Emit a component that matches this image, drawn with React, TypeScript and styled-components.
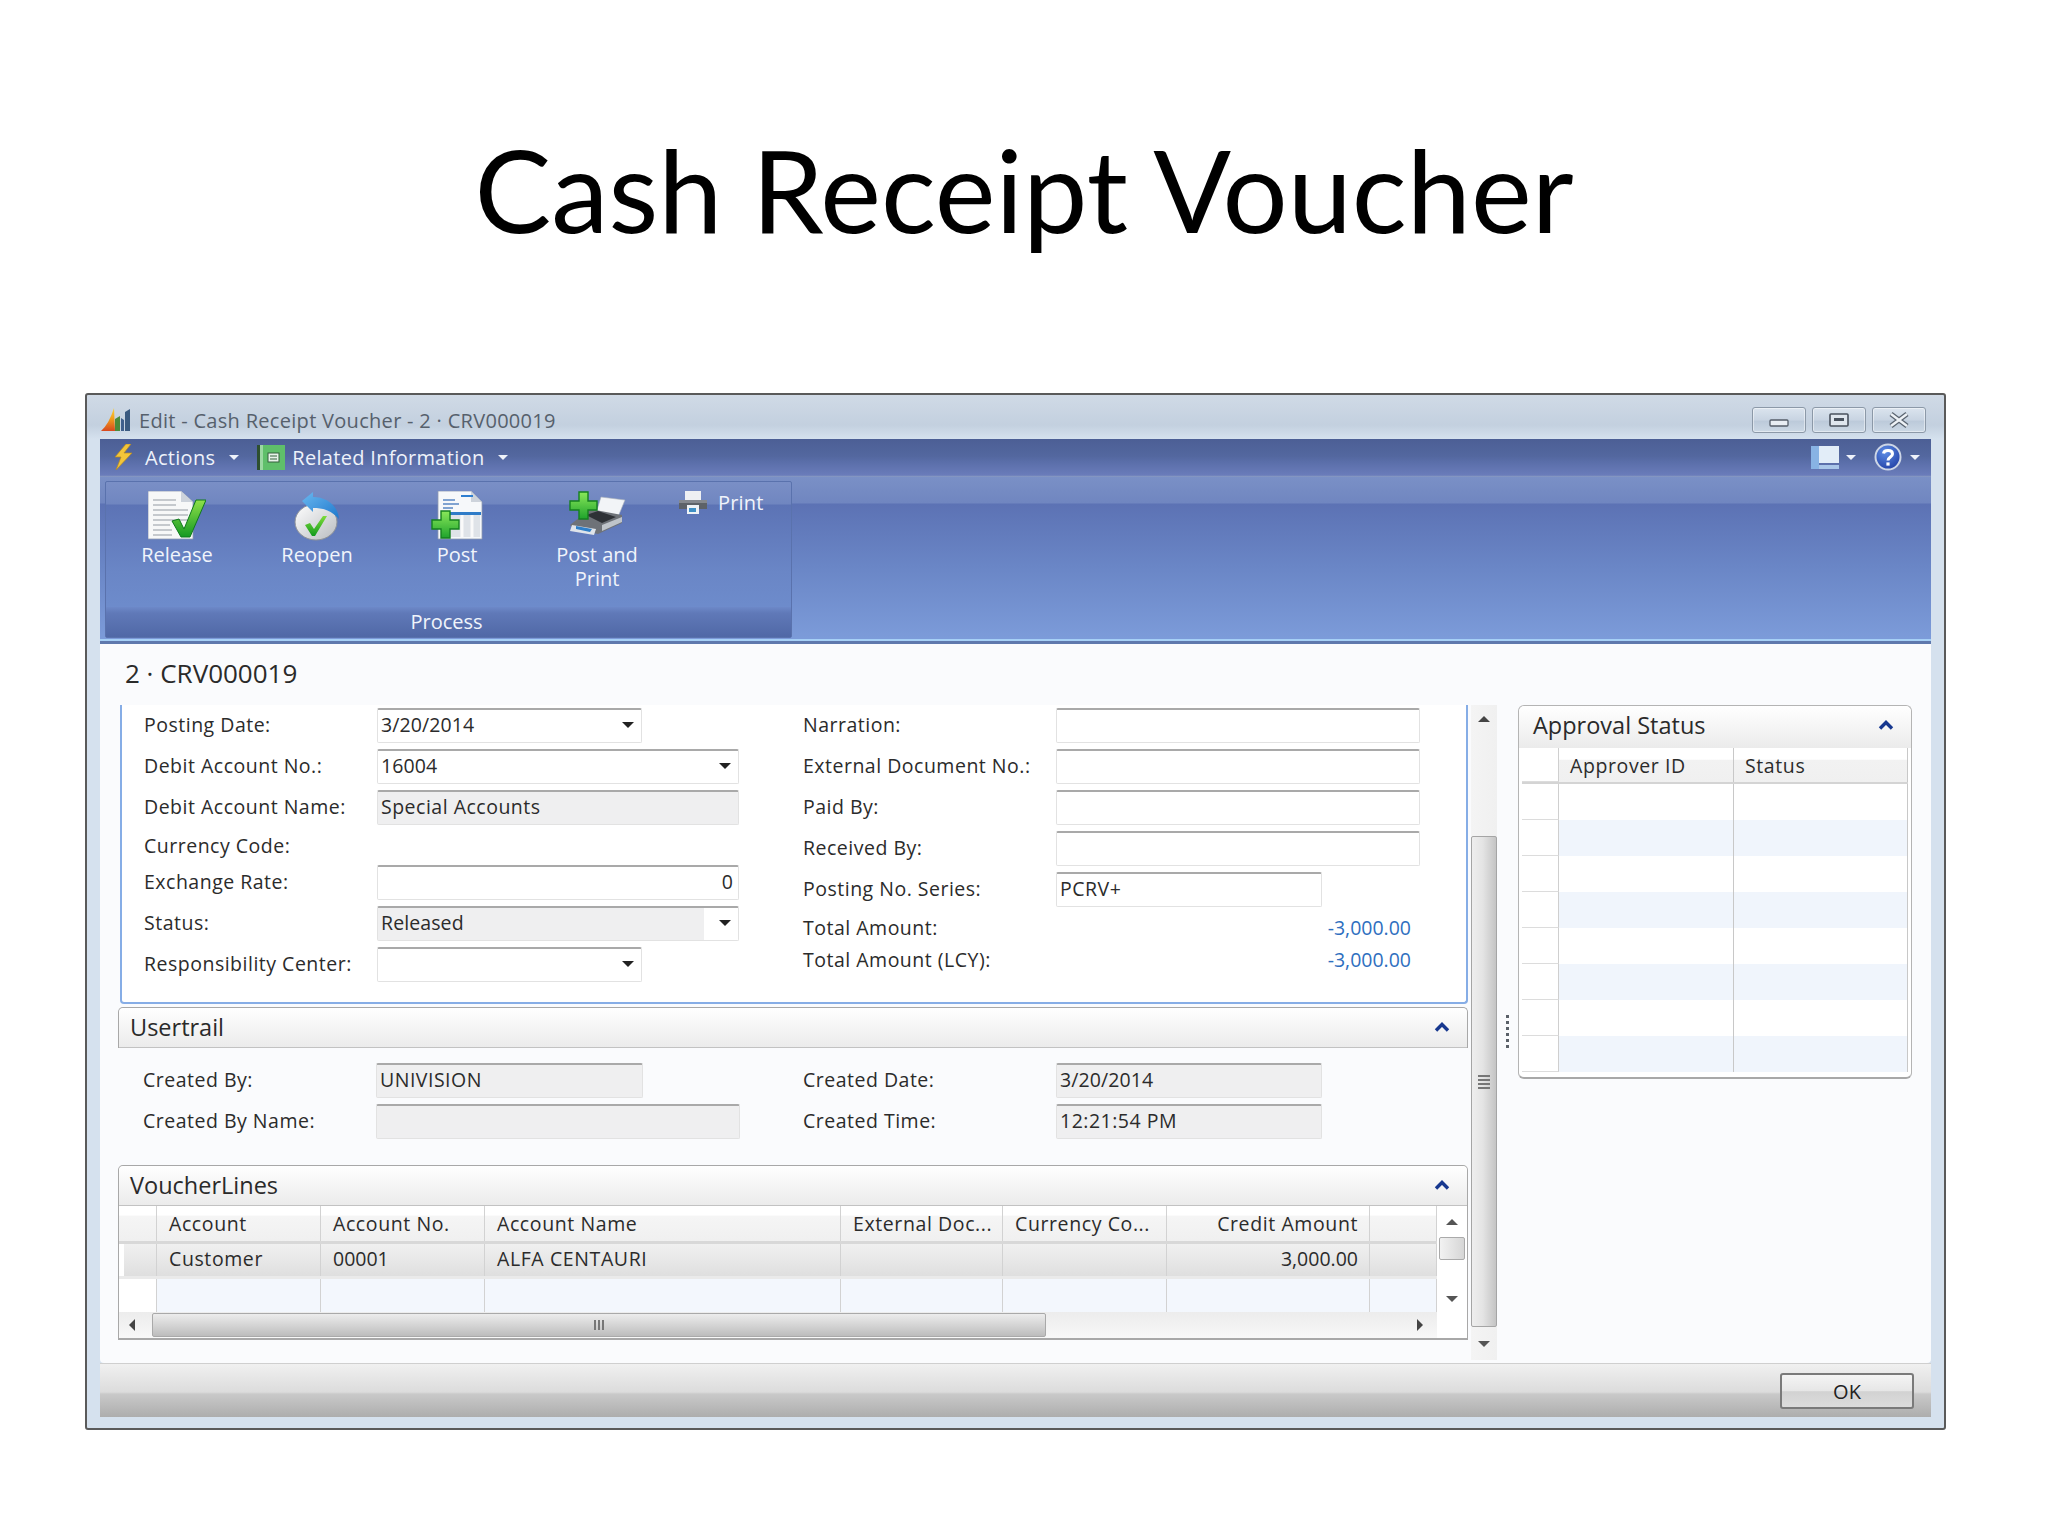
import styled, { createGlobalStyle } from "styled-components";

const GlobalStyle = createGlobalStyle`
    body {
        margin: 0;
        background: #fff;
        font-family: "Open Sans", "Liberation Sans", sans-serif;
        font-size: 19.5px;
        color: #2b2b2b;
    }
`

const Slide = styled.div`
    width: 2048px;
    height: 1536px;
    overflow: hidden;
`
const SlideTitle = styled.h1`
    margin: 0;
    height: 393px;
    padding-top: 110px;
    box-sizing: border-box;
    text-align: center;
    font-family: Lato, "Open Sans", sans-serif;
    font-weight: 400;
    font-size: 115px;
    line-height: 156px;
    color: #000;
`
const Window = styled.div`
    margin-left: 85px;
    width: 1861px;
    height: 1037px;
    box-sizing: border-box;
    border: 2px solid #5a5a5a;
    border-radius: 3px;
    padding: 0 13px 11px;
    background: linear-gradient(#d0dae6, #c3d0df 30px, #d5e1ee 44px, #d5e1ee);
    display: flex;
    flex-direction: column;
`
const TitleBar = styled.div`
    height: 44px;
    flex: none;
    display: flex;
    align-items: center;
    font-size: 20px;
    letter-spacing: .3px;
    color: #56606c;
    padding: 0 5px 0 1px;
`
const WindowTitle = styled.span`
    margin-left: 8px;
    margin-top: 6px;
    flex: 1;
`
const WindowButton = styled.div`
    width: 54px;
    height: 26px;
    margin-left: 6px;
    margin-top: 6px;
    box-sizing: border-box;
    border: 1px solid #8c99a8;
    border-radius: 3px;
    background: linear-gradient(#dbe4ee, #c8d4e2 50%, #bccada 55%, #ccd8e5);
    box-shadow: inset 0 0 0 1px rgba(255, 255, 255, .45);
    display: flex;
    align-items: center;
    justify-content: center;
`
const MenuBar = styled.div`
    height: 38px;
    flex: none;
    box-sizing: border-box;
    display: flex;
    align-items: center;
    padding: 0 11px 2px 13px;
    background: linear-gradient(#4c5f95, #53679f 45%, #5a6ea9 60%, #6a7cba 95%, #8d9fc4);
    color: #eef2fa;
    font-size: 20px;
    letter-spacing: .3px;
`
const MenuLabel = styled.span<{ $gap: number }>`
    margin-left: ${p => p.$gap}px;
    display: flex;
`
const Arrow = styled.span<{ $dir?: "up" | "down" | "left" | "right"; $color?: string; $size?: number }>`
    display: inline-block;
    flex: none;
    width: 0;
    height: 0;
    border-style: solid;
    border-color: transparent;
    border-width: ${p => p.$size ?? 5}px;
    ${p => (p.$dir === "up" ? "border-top-width: 0; border-bottom-color: " : p.$dir === "left" ? "border-left-width: 0; border-right-color: " : p.$dir === "right" ? "border-right-width: 0; border-left-color: " : "border-bottom-width: 0; border-top-color: ")}${p => p.$color ?? "#222"};
`
const MenuArrow = styled(Arrow)<{ $gap: number }>`
    margin-left: ${p => p.$gap}px;
`
const Spacer = styled.div`
    flex: 1;
`
const Ribbon = styled.div`
    height: 167px;
    flex: none;
    box-sizing: border-box;
    padding: 4px 0 6px 5px;
    background: linear-gradient(#7a90c6, #7086c0 26px, #5c72b4 27px, #6a86c6 90px, #7c9bd9 161px);
    border-bottom: 3px solid #5f79ad;
    box-shadow: inset 0 -2px 0 #a6d0f6;
`
const RibbonGroup = styled.div`
    width: 687px;
    height: 157px;
    box-sizing: border-box;
    border: 1px solid #5a72ad;
    border-radius: 2px;
    display: flex;
    flex-direction: column;
    background: linear-gradient(#7a8fc6, #7086c0 22px, #5c73b5 23px, #6a86c6 90px, #7090d0);
    color: #f0f4fb;
`
const RibbonButtons = styled.div`
    flex: 1;
    display: flex;
    padding: 9px 0 0 1px;
`
const RibbonButton = styled.div`
    width: 140px;
    text-align: center;
    font-size: 20px;
    line-height: 24px;
`
const RibbonIcon = styled.div`
    height: 52px;
    display: flex;
    justify-content: center;
`
const SmallRibbonButton = styled.div`
    margin-left: 11px;
    display: flex;
    align-items: flex-start;
    gap: 10px;
    font-size: 20px;
    letter-spacing: .2px;
    line-height: 24px;
`
const GroupCaption = styled.div`
    height: 30px;
    flex: none;
    background: linear-gradient(#6d88c8, #6079b8 20%, #5068a6);
    text-align: center;
    font-size: 20px;
    line-height: 30px;
    padding-right: 4px;
`
const Content = styled.div`
    height: 719px;
    flex: none;
    background: #fafbfd;
    border-radius: 0 0 4px 4px;
`
const PageHeading = styled.div`
    height: 61px;
    box-sizing: border-box;
    padding: 14px 0 0 25px;
    font-size: 26px;
    line-height: 30px;
    color: #2a2a2a;
`
const Columns = styled.div`
    display: flex;
    padding-left: 18px;
`
const FormColumn = styled.div`
    width: 1350px;
    flex: none;
`
const GeneralTab = styled.div`
    height: 299px;
    box-sizing: border-box;
    margin-left: 2px;
    padding: 3px 0 0 22px;
    border: 2px solid #86ade6;
    border-top: 0;
    border-radius: 0 0 4px 4px;
    background: #fff;
    display: flex;
`
const FieldColumn = styled.div<{ $width: number; $labelWidth: number }>`
    width: ${p => p.$width}px;
    flex: none;
    display: grid;
    grid-template-columns: ${p => p.$labelWidth}px 1fr;
    align-content: start;
    row-gap: 6px;
`
const Label = styled.div<{ $short?: boolean; $tight?: boolean }>`
    display: flex;
    align-items: center;
    box-sizing: border-box;
    min-height: 28px;
    margin-top: ${p => (p.$tight ? -2 : 0)}px;
    padding-bottom: ${p => (p.$short ? 0 : 3)}px;
    font-size: 19.5px;
    letter-spacing: .5px;
    white-space: nowrap;
    color: #2b2b2b;
`
const Field = styled.div<{ $width: number; $gray?: boolean; $right?: boolean; $wide?: boolean }>`
    width: ${p => p.$width}px;
    height: 35px;
    box-sizing: border-box;
    border: 1px solid #e2e2e2;
    border-top: 2px solid #a9a9a9;
    border-radius: 2px;
    background: ${p => (p.$gray ? "#efeff0" : "#fff")};
    display: flex;
    align-items: center;
    justify-content: ${p => (p.$right ? "flex-end" : "space-between")};
    padding: 0 ${p => (p.$right ? 5 : 0)}px 3px 3px;
    font-size: 19.5px;
    letter-spacing: ${p => (p.$wide ? ".5px" : ".1px")};
    color: #2b2b2b;
`
const PartlyGrayField = styled(Field)`
    background: linear-gradient(90deg, #efeff0 326px, #fff 326px);
`
const DropArrow = styled(Arrow)`
    margin-right: 7px;
`
const EmptyCell = styled.div``
const AmountCell = styled.div<{ $tight?: boolean }>`
    width: 355px;
    display: flex;
    align-items: center;
    justify-content: flex-end;
    margin-top: ${p => (p.$tight ? -2 : 0)}px;
    color: #2f6fc0;
    font-size: 19.5px;
`
const TabHeader = styled.div`
    height: 40px;
    box-sizing: border-box;
    border-bottom: 1px solid #c2c2c2;
    background: linear-gradient(#fff, #ebebeb);
    border-radius: 5px 5px 0 0;
    display: flex;
    align-items: center;
    justify-content: space-between;
    padding: 0 17px 2px 11px;
    font-size: 23.5px;
    color: #2a2a2a;
`
const UsertrailTab = styled.div`
    margin-top: 3px;
    box-sizing: border-box;
    border: 1px solid #a8a8a8;
    border-bottom: 0;
    border-radius: 5px 5px 0 0;
`
const UsertrailBody = styled.div`
    display: flex;
    padding: 15px 0 0 25px;
    height: 117px;
    box-sizing: border-box;
`
const VoucherTab = styled.div`
    box-sizing: border-box;
    border: 1px solid #a8a8a8;
    border-bottom: 2px solid #a8a8a8;
    border-radius: 5px 5px 0 0;
    background: #fff;
`
const GridWrap = styled.div`
    display: flex;
`
const GridColumn = styled.div`
    width: 1318px;
    flex: none;
`
const GridRow = styled.div<{ $kind: "head" | "selected" | "plain" }>`
    display: grid;
    grid-template-columns: 38px 164px 164px 356px 162px 164px 203px 67px;
    height: ${p => (p.$kind === "head" ? 38 : p.$kind === "selected" ? 35 : 33)}px;
    box-sizing: border-box;
    background: ${p =>
        p.$kind === "head" ? "linear-gradient(#fff 25%, #f5f5f5 30%, #f0f0f0)" :
        p.$kind === "selected" ? "linear-gradient(90deg, #fff 5px, transparent 5px), linear-gradient(#f0f0f0, #dfdfdf)" : "#f3f7fd"};
    border-bottom: ${p => (p.$kind === "plain" ? "0" : p.$kind === "head" ? "3px solid #d8d8d8" : "3px solid #eaeaea")};
`
const GridCell = styled.div<{ $right?: boolean; $blank?: boolean; $num?: boolean; $raised?: boolean }>`
    display: flex;
    align-items: center;
    justify-content: ${p => (p.$right ? "flex-end" : "flex-start")};
    padding: 0 ${p => (p.$right ? 11 : 0)}px ${p => (p.$raised ? 3 : 0)}px ${p => (p.$right ? 0 : 12)}px;
    border-right: 1px solid #d2d2d2;
    font-size: 19.5px;
    letter-spacing: ${p => (p.$num ? "0" : ".6px")};
    white-space: nowrap;
    overflow: hidden;
    background: ${p => (p.$blank ? "#fff" : "transparent")};
`
const HScrollRow = styled.div`
    height: 26px;
    display: flex;
    background: #fff;
`
const HScroll = styled.div`
    width: 1318px;
    flex: none;
    box-sizing: border-box;
    display: flex;
    align-items: center;
    background: linear-gradient(#ececec, #f8f8f8);
    padding-left: 10px;
`
const HThumb = styled.div`
    width: 894px;
    height: 24px;
    margin-left: 17px;
    box-sizing: border-box;
    border: 1px solid #a9a9a9;
    border-radius: 2px;
    background: linear-gradient(#ececec, #d0d0d0 60%, #bcbcbc);
    display: flex;
    align-items: center;
    justify-content: center;
    gap: 2px;
`
const HScrollEnd = styled.div`
    flex: 1;
    display: flex;
    justify-content: flex-end;
    padding-right: 14px;
`
const GripLine = styled.div<{ $vertical?: boolean }>`
    background: #777;
    width: ${p => (p.$vertical ? "2px" : "12px")};
    height: ${p => (p.$vertical ? "10px" : "2px")};
`
const InnerScroll = styled.div`
    flex: 1;
    height: 106px;
    display: flex;
    flex-direction: column;
    align-items: center;
    background: #fff;
    padding-top: 13px;
    box-sizing: border-box;
`
const InnerThumb = styled.div`
    width: 26px;
    height: 23px;
    margin: 12px 0 36px;
    box-sizing: border-box;
    border: 1px solid #aaa;
    border-radius: 2px;
    background: linear-gradient(90deg, #f2f2f2, #d6d6d6);
`
const MainScroll = styled.div`
    width: 26px;
    height: 655px;
    margin-left: 3px;
    flex: none;
    display: flex;
    flex-direction: column;
    background: linear-gradient(90deg, #f4f4f4, #f0f0f0);
`
const ScrollEnd = styled.div<{ $height: number; $pad: number }>`
    height: ${p => p.$height}px;
    flex: none;
    box-sizing: border-box;
    padding-top: ${p => p.$pad}px;
    display: flex;
    justify-content: center;
`
const MainThumb = styled.div`
    height: 491px;
    flex: none;
    box-sizing: border-box;
    border: 1px solid #a5a5a5;
    border-radius: 2px;
    background: linear-gradient(90deg, #eeeeee, #e4e4e4 45%, #c4c4c4);
    display: flex;
    flex-direction: column;
    align-items: center;
    justify-content: center;
    gap: 2px;
`
const Splitter = styled.div`
    width: 21px;
    flex: none;
    padding-top: 310px;
    box-sizing: border-box;
    display: flex;
    flex-direction: column;
    align-items: center;
    gap: 3px;
`
const SplitterDot = styled.div`
    width: 3px;
    height: 3px;
    background: #5a6068;
`
const Aside = styled.div`
    width: 394px;
    height: 374px;
    flex: none;
    box-sizing: border-box;
    border: 1px solid #b4b4b4;
    border-bottom: 2px solid #a8a8a8;
    border-radius: 6px;
    padding: 0 3px 5px;
    background: #fff;
`
const AsideHeader = styled.div`
    height: 42px;
    margin: 0 -3px;
    box-sizing: border-box;
    background: linear-gradient(#fff, #ebebeb);
    border-radius: 6px 6px 0 0;
    display: flex;
    align-items: center;
    justify-content: space-between;
    padding: 0 17px 4px 14px;
    font-size: 23.5px;
    color: #2a2a2a;
`
const ApprovalRow = styled.div<{ $alt?: boolean; $head?: boolean }>`
    display: grid;
    grid-template-columns: 37px 175px 1fr;
    height: 36px;
    box-sizing: border-box;
    background: ${p => (p.$head ? "linear-gradient(#fff 33%, #f2f2f2 36%, #f0f0f0)" : p.$alt ? "#f0f5fc" : "#fff")};
    border-bottom: ${p => (p.$head ? "2px solid #d4d4d4" : "0")};
`
const ApprovalHandle = styled.div`
    background: #fff;
    border-right: 1px solid #cfcfcf;
    border-bottom: 1px solid #dcdcdc;
`
const ApprovalCell = styled.div`
    border-right: 1px solid #c8c8c8;
    display: flex;
    align-items: center;
    padding: 1px 0 0 11px;
    font-size: 19.5px;
    letter-spacing: .6px;
`
const Footer = styled.div`
    height: 54px;
    flex: none;
    box-sizing: border-box;
    border-top: 1px solid #cfcfcf;
    background: linear-gradient(#f0f0f0, #dcdcdc 28px, #c9c9c9 30px, #adadad);
    display: flex;
    justify-content: flex-end;
    padding: 9px 17px 0 0;
`
const OkButton = styled.div`
    width: 134px;
    height: 36px;
    box-sizing: border-box;
    border: 2px solid #7a7a7a;
    border-radius: 3px;
    background: linear-gradient(#f4f4f4, #e6e6e6 50%, #d2d2d2 52%, #dcdcdc);
    display: flex;
    align-items: center;
    justify-content: center;
    font-size: 20px;
    color: #222;
`

const Chevron = () => (
    <svg width="16" height="12" viewBox="0 0 16 12">
        <path d="M2 9.5 L8 3.5 L14 9.5" fill="none" stroke="#17388f" strokeWidth="3.4" />
    </svg>
)

const Logo = () => (
    <svg width="30" height="24" viewBox="0 0 30 24" style={{ marginTop: 6 }}>
        <defs>
            <linearGradient id="logoA" x1="0" y1="1" x2="0" y2="0">
                <stop offset="0" stopColor="#d8481f" />
                <stop offset=".55" stopColor="#f2a01c" />
                <stop offset="1" stopColor="#f8d23a" />
            </linearGradient>
        </defs>
        <path d="M0 23 Q8 16 13 0 L14 23 Z" fill="url(#logoA)" />
        <path d="M14 23 L14 11 L19 8 L19 23 Z" fill="#4b8a3a" />
        <path d="M20 23 L20 10 L23 12 L23 23 Z" fill="#3f5f8c" />
        <path d="M24 23 L24 4 L29 1 L29 23 Z" fill="#3a5a80" />
    </svg>
)

const Bolt = () => (
    <svg width="20" height="26" viewBox="0 0 20 26">
        <path d="M13 0 L2 13 L8 13 L3 26 L19 9 L11 9 L18 0 Z" fill="#f2c53a" stroke="#b98a1e" strokeWidth=".7" />
    </svg>
)

const RelatedIcon = () => (
    <svg width="29" height="25" viewBox="0 0 29 25">
        <rect x="1" y="0" width="27" height="25" fill="#5fbf6a" />
        <rect x="0" y="0" width="3" height="25" fill="#2d4f30" />
        <rect x="3" y="0" width="3" height="25" fill="#9bd8a2" />
        <rect x="11" y="8" width="11" height="9" fill="#e8f3ea" stroke="#35603d" />
        <path d="M13 11H20M13 14H20" stroke="#35603d" />
    </svg>
)

const LayoutIcon = () => (
    <svg width="28" height="23" viewBox="0 0 28 23">
        <rect x="0" y="0" width="8" height="23" fill="#88b3e4" />
        <rect x="8" y="0" width="20" height="17" fill="#e2edf8" />
        <rect x="8" y="19" width="20" height="4" fill="#a9c6e9" />
    </svg>
)

const HelpIcon = () => (
    <svg width="28" height="28" viewBox="0 0 28 28">
        <defs>
            <radialGradient id="helpG" cx=".4" cy=".3" r=".8">
                <stop offset="0" stopColor="#5f8ee6" />
                <stop offset="1" stopColor="#1c3aa0" />
            </radialGradient>
        </defs>
        <circle cx="14" cy="14" r="12.5" fill="url(#helpG)" stroke="#cdd6e6" strokeWidth="2" />
        <path d="M9.5 10.5 C10 6.5 18.5 6.5 18.5 11 C18.5 14 14 14 14 17.5" fill="none" stroke="#fff" strokeWidth="3" />
        <rect x="12.4" y="19.4" width="3.2" height="3.2" fill="#fff" />
    </svg>
)

const ReleaseIcon = () => (
    <svg width="58" height="50" viewBox="0 0 58 50">
        <defs>
            <linearGradient id="checkG" x1="0" y1="0" x2="0" y2="1">
                <stop offset="0" stopColor="#8fe04a" />
                <stop offset="1" stopColor="#159a22" />
            </linearGradient>
        </defs>
        <path d="M0 0 H33 L45 11 V48 H0 Z" fill="#f7f8f8" stroke="#8f9bb0" strokeWidth=".8" />
        <path d="M33 0 V11 H45 Z" fill="#cdd3db" />
        <path d="M5 9H28M5 14H28M5 19H40M5 24H40M5 29H40M5 34H22M5 39H24M5 44H24" stroke="#b5b9be" strokeWidth="1.6" />
        <path d="M24 30 L31 28 L36 38 L48 9 L58 9 L42 46 L33 46 Z" fill="url(#checkG)" stroke="#0f7a1c" strokeWidth="1" />
    </svg>
)

const ReopenIcon = () => (
    <svg width="46" height="50" viewBox="0 0 46 50">
        <defs>
            <linearGradient id="discG" x1="0" y1="0" x2="1" y2="1">
                <stop offset="0" stopColor="#ffffff" />
                <stop offset="1" stopColor="#b9bcc0" />
            </linearGradient>
            <linearGradient id="check2G" x1="0" y1="0" x2="0" y2="1">
                <stop offset="0" stopColor="#7fdc3a" />
                <stop offset="1" stopColor="#129a1e" />
            </linearGradient>
            <linearGradient id="arcG" x1="0" y1="0" x2="1" y2="1">
                <stop offset="0" stopColor="#6ab8f0" />
                <stop offset="1" stopColor="#1f78cc" />
            </linearGradient>
        </defs>
        <ellipse cx="22" cy="31" rx="21" ry="18" fill="url(#discG)" stroke="#8e9298" />
        <path d="M8 10 L19 1 L19 6 C32 6 44 14 45 28 C38 20 30 17 19 17 L19 21 Z" fill="url(#arcG)" />
        <path d="M11 34 L16 32 L20 38 L29 25 L33 25 L21 45 L18 45 Z" fill="url(#check2G)" />
    </svg>
)

const PostIcon = () => (
    <svg width="52" height="50" viewBox="0 0 52 50">
        <defs>
            <linearGradient id="plusG" x1="0" y1="0" x2="0" y2="1">
                <stop offset="0" stopColor="#8ae85a" />
                <stop offset="1" stopColor="#1fa32c" />
            </linearGradient>
        </defs>
        <path d="M7 0 H40 L51 11 V48 H7 Z" fill="#f6f8fa" stroke="#8f9bb0" strokeWidth=".8" />
        <path d="M40 0 V11 H51 Z" fill="#cdd3db" />
        <path d="M12 9H24M12 13H28M12 17H22" stroke="#5a86c4" strokeWidth="1.6" />
        <path d="M30 5H42" stroke="#2f7fd0" strokeWidth="2" />
        <rect x="16" y="21" width="34" height="3" fill="#2f7cc8" />
        <path d="M17 24 H49 V46 H17 Z" fill="#dfe3e8" />
        <path d="M31 24V46M41 24V46" stroke="#fafafa" strokeWidth="3" />
        <path d="M10 20 H19 V29 H28 V38 H19 V47 H10 V38 H1 V29 H10 Z" fill="url(#plusG)" stroke="#14801f" strokeWidth="1.4" />
    </svg>
)

const PostPrintIcon = () => (
    <svg width="58" height="46" viewBox="0 0 58 46">
        <defs>
            <linearGradient id="plus2G" x1="0" y1="0" x2="0" y2="1">
                <stop offset="0" stopColor="#8ae85a" />
                <stop offset="1" stopColor="#1fa32c" />
            </linearGradient>
        </defs>
        <path d="M33 6 L57 9 L50 26 L28 22 Z" fill="#f2f4f7" stroke="#aab0b8" strokeWidth=".6" />
        <path d="M2 34 L22 18 L54 24 L54 32 L30 43 L6 38 Z" fill="#6e7278" />
        <path d="M18 24 L30 20 L48 26 L34 32 Z" fill="#2e3136" />
        <path d="M4 34 L28 38 L26 44 L2 40 Z" fill="#dfe4ea" />
        <path d="M8 35 L24 38 L22 41 L8 38 Z" fill="#2f7fc8" />
        <path d="M34 34 L54 26 L54 31 L34 40 Z" fill="#bfc4ca" />
        <path d="M11 1 H20 V10 H29 V19 H20 V28 H11 V19 H2 V10 H11 Z" fill="url(#plus2G)" stroke="#14801f" strokeWidth="1.4" />
    </svg>
)

const PrintIcon = () => (
    <svg width="30" height="24" viewBox="0 0 30 24">
        <rect x="7" y="0" width="16" height="9" fill="#eef0f3" />
        <path d="M1 9 H29 V18 H1 Z" fill="#5d6268" />
        <rect x="1" y="9" width="28" height="3" fill="#85898f" />
        <rect x="9" y="14" width="12" height="9" fill="#eef2f6" />
        <rect x="11" y="17" width="7" height="4" fill="#3f8fc4" />
    </svg>
)

const MinimizeGlyph = () => (
    <svg width="20" height="10" viewBox="0 0 20 10" style={{ marginTop: 6 }}>
        <rect x="1" y="2" width="18" height="6" rx="1" fill="#e8edf3" stroke="#555e6a" strokeWidth="1.3" />
    </svg>
)

const MaximizeGlyph = () => (
    <svg width="20" height="14" viewBox="0 0 20 14">
        <rect x="1" y="1" width="18" height="12" rx="1" fill="#dfe6ee" stroke="#49525e" strokeWidth="1.6" />
        <rect x="5" y="5" width="10" height="3" fill="#49525e" />
    </svg>
)

const CloseGlyph = () => (
    <svg width="22" height="16" viewBox="0 0 22 16">
        <path d="M3 2 L19 14 M19 2 L3 14" stroke="#5a6470" strokeWidth="5" />
        <path d="M3 2 L19 14 M19 2 L3 14" stroke="#eef2f6" strokeWidth="2.4" />
    </svg>
)

const gridColumns = ["", "Account", "Account No.", "Account Name", "External Doc...", "Currency Co...", "Credit Amount", ""]
const approvalRows = [false, true, false, true, false, true, false, true]

export default function App() {
    return (
        <Slide>
            <GlobalStyle />
            <SlideTitle>Cash Receipt Voucher</SlideTitle>
            <Window>
                <TitleBar>
                    <Logo />
                    <WindowTitle>Edit - Cash Receipt Voucher - 2 · CRV000019</WindowTitle>
                    <WindowButton><MinimizeGlyph /></WindowButton>
                    <WindowButton><MaximizeGlyph /></WindowButton>
                    <WindowButton><CloseGlyph /></WindowButton>
                </TitleBar>
                <MenuBar>
                    <Bolt />
                    <MenuLabel $gap={12}>Actions</MenuLabel>
                    <MenuArrow $gap={14} $color="#eef2fa" />
                    <MenuLabel $gap={18}><RelatedIcon /></MenuLabel>
                    <MenuLabel $gap={6}>Related Information</MenuLabel>
                    <MenuArrow $gap={14} $color="#eef2fa" />
                    <Spacer />
                    <LayoutIcon />
                    <MenuArrow $gap={7} $color="#eef2fa" />
                    <MenuLabel $gap={18}><HelpIcon /></MenuLabel>
                    <MenuArrow $gap={8} $color="#eef2fa" />
                </MenuBar>
                <Ribbon>
                    <RibbonGroup>
                        <RibbonButtons>
                            <RibbonButton><RibbonIcon><ReleaseIcon /></RibbonIcon>Release</RibbonButton>
                            <RibbonButton><RibbonIcon><ReopenIcon /></RibbonIcon>Reopen</RibbonButton>
                            <RibbonButton><RibbonIcon><PostIcon /></RibbonIcon>Post</RibbonButton>
                            <RibbonButton><RibbonIcon><PostPrintIcon /></RibbonIcon>Post and<br />Print</RibbonButton>
                            <SmallRibbonButton><PrintIcon />Print</SmallRibbonButton>
                        </RibbonButtons>
                        <GroupCaption>Process</GroupCaption>
                    </RibbonGroup>
                </Ribbon>
                <Content>
                    <PageHeading>2 · CRV000019</PageHeading>
                    <Columns>
                        <FormColumn>
                            <GeneralTab>
                                <FieldColumn $width={659} $labelWidth={233}>
                                    <Label>Posting Date:</Label>
                                    <Field $width={265}>3/20/2014<DropArrow $size={6} /></Field>
                                    <Label>Debit Account No.:</Label>
                                    <Field $width={362}>16004<DropArrow $size={6} /></Field>
                                    <Label>Debit Account Name:</Label>
                                    <Field $width={362} $gray $wide>Special Accounts</Field>
                                    <Label $short>Currency Code:</Label>
                                    <EmptyCell />
                                    <Label>Exchange Rate:</Label>
                                    <Field $width={362} $right>0</Field>
                                    <Label>Status:</Label>
                                    <PartlyGrayField $width={362}>Released<DropArrow $size={6} /></PartlyGrayField>
                                    <Label>Responsibility Center:</Label>
                                    <Field $width={265}><span />
                                        <DropArrow $size={6} /></Field>
                                </FieldColumn>
                                <FieldColumn $width={617} $labelWidth={253}>
                                    <Label>Narration:</Label>
                                    <Field $width={364} />
                                    <Label>External Document No.:</Label>
                                    <Field $width={364} />
                                    <Label>Paid By:</Label>
                                    <Field $width={364} />
                                    <Label>Received By:</Label>
                                    <Field $width={364} />
                                    <Label>Posting No. Series:</Label>
                                    <Field $width={266} $wide>PCRV+</Field>
                                    <Label $short>Total Amount:</Label>
                                    <AmountCell>-3,000.00</AmountCell>
                                    <Label $short $tight>Total Amount (LCY):</Label>
                                    <AmountCell $tight>-3,000.00</AmountCell>
                                </FieldColumn>
                            </GeneralTab>
                            <UsertrailTab>
                                <TabHeader>Usertrail<Chevron /></TabHeader>
                            </UsertrailTab>
                            <UsertrailBody>
                                <FieldColumn $width={660} $labelWidth={233}>
                                    <Label>Created By:</Label>
                                    <Field $width={267} $gray $wide>UNIVISION</Field>
                                    <Label>Created By Name:</Label>
                                    <Field $width={364} $gray />
                                </FieldColumn>
                                <FieldColumn $width={617} $labelWidth={253}>
                                    <Label>Created Date:</Label>
                                    <Field $width={266} $gray>3/20/2014</Field>
                                    <Label>Created Time:</Label>
                                    <Field $width={266} $gray $wide>12:21:54 PM</Field>
                                </FieldColumn>
                            </UsertrailBody>
                            <VoucherTab>
                                <TabHeader>VoucherLines<Chevron /></TabHeader>
                                <GridWrap>
                                    <GridColumn>
                                        <GridRow $kind="head">
                                            {gridColumns.map((name, i) => (
                                                <GridCell key={i} $right={name === "Credit Amount"}>{name}</GridCell>
                                            ))}
                                        </GridRow>
                                        <GridRow $kind="selected">
                                            <GridCell />
                                            <GridCell $raised>Customer</GridCell>
                                            <GridCell $raised $num>00001</GridCell>
                                            <GridCell $raised>ALFA CENTAURI</GridCell>
                                            <GridCell />
                                            <GridCell />
                                            <GridCell $raised $right $num>3,000.00</GridCell>
                                            <GridCell />
                                        </GridRow>
                                        <GridRow $kind="plain">
                                            {gridColumns.map((_, i) => <GridCell key={i} $blank={i === 0} />)}
                                        </GridRow>
                                    </GridColumn>
                                    <InnerScroll>
                                        <Arrow $dir="up" $color="#555" $size={6} />
                                        <InnerThumb />
                                        <Arrow $color="#555" $size={6} />
                                    </InnerScroll>
                                </GridWrap>
                                <HScrollRow>
                                    <HScroll>
                                        <Arrow $dir="left" $color="#444" $size={6} />
                                        <HThumb>
                                            <GripLine $vertical /><GripLine $vertical /><GripLine $vertical />
                                        </HThumb>
                                        <HScrollEnd><Arrow $dir="right" $color="#444" $size={6} /></HScrollEnd>
                                    </HScroll>
                                </HScrollRow>
                            </VoucherTab>
                        </FormColumn>
                        <MainScroll>
                            <ScrollEnd $height={131} $pad={11}><Arrow $dir="up" $color="#444" $size={6} /></ScrollEnd>
                            <MainThumb><GripLine /><GripLine /><GripLine /><GripLine /></MainThumb>
                            <ScrollEnd $height={33} $pad={14}><Arrow $color="#555" $size={6} /></ScrollEnd>
                        </MainScroll>
                        <Splitter>
                            {[0, 1, 2, 3, 4, 5].map(i => <SplitterDot key={i} />)}
                        </Splitter>
                        <Aside>
                            <AsideHeader>Approval Status<Chevron /></AsideHeader>
                            <ApprovalRow $head>
                                <ApprovalHandle />
                                <ApprovalCell>Approver ID</ApprovalCell>
                                <ApprovalCell>Status</ApprovalCell>
                            </ApprovalRow>
                            {approvalRows.map((alt, i) => (
                                <ApprovalRow key={i} $alt={alt}>
                                    <ApprovalHandle />
                                    <ApprovalCell />
                                    <ApprovalCell />
                                </ApprovalRow>
                            ))}
                        </Aside>
                    </Columns>
                </Content>
                <Footer><OkButton>OK</OkButton></Footer>
            </Window>
        </Slide>
    );
}
